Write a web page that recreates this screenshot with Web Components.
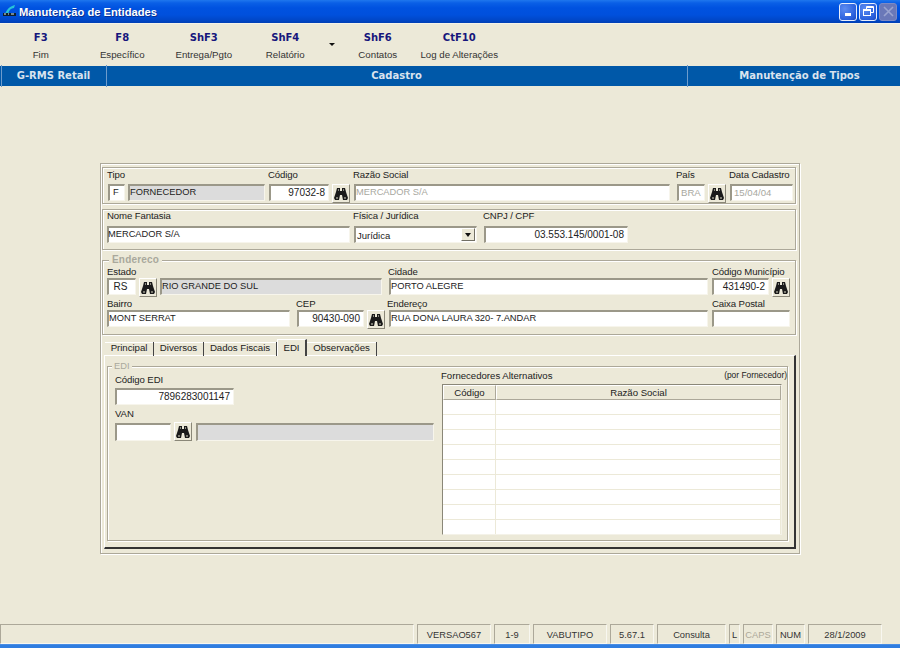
<!DOCTYPE html>
<html lang="pt">
<head>
<meta charset="utf-8">
<title>Manutenção de Entidades</title>
<style>
  html, body { margin: 0; height: 100%; background: #ece9d8; overflow: hidden; }
  body { font: 9.6px "Liberation Sans", Arial, sans-serif; color: #222; }
</style>
</head>
<body>
<win-app>
  <win-titlebar slot="top">Manutenção de Entidades</win-titlebar>
  <win-toolbar slot="top">
    <tool-btn key="F3">Fim</tool-btn>
    <tool-btn key="F8">Específico</tool-btn>
    <tool-btn key="ShF3">Entrega/Pgto</tool-btn>
    <tool-btn key="ShF4" menu>Relatório</tool-btn>
    <tool-btn key="ShF6">Contatos</tool-btn>
    <tool-btn key="CtF10">Log de Alterações</tool-btn>
  </win-toolbar>
  <nav-band slot="top"></nav-band>

  <form-panel>
    <group-box style="height:34px;padding-top:1px">
      <form-row>
        <form-field label="Tipo" style="--lx:-1px;width:17px;margin-left:1px"><text-box style="padding-left:3px">F</text-box></form-field>
        <form-field style="width:137px;margin-left:3px"><text-box kind="ro">FORNECEDOR</text-box></form-field>
        <form-field label="Código" style="--lx:-1px;width:60px;margin-left:4px"><text-box align="right">97032-8</text-box></form-field>
        <find-btn style="margin-left:3px"></find-btn>
        <form-field label="Razão Social" style="--lx:-1px;width:316px;margin-left:4px"><text-box kind="off">MERCADOR S/A</text-box></form-field>
        <form-field label="País" style="--lx:-1px;width:28px;margin-left:7px"><text-box kind="off" style="font-size:9.6px;padding-left:2px">BRA</text-box></form-field>
        <find-btn style="margin-left:3px"></find-btn>
        <form-field label="Data Cadastro" style="--lx:-1px;width:63px;margin-left:4px"><text-box kind="off" style="font-size:9.6px;padding-left:2px">15/04/04</text-box></form-field>
      </form-row>
    </group-box>
    <group-box style="height:39px;margin-top:5px;padding-top:0">
      <form-row>
        <form-field label="Nome Fantasia" gap="4" style="width:243px"><text-box style="text-indent:-1px">MERCADOR S/A</text-box></form-field>
        <form-field label="Física / Jurídica" gap="4" style="--lx:-1px;width:123px;margin-left:4px"><combo-box>Jurídica</combo-box></form-field>
        <form-field label="CNPJ / CPF" gap="4" style="--lx:-1px;width:144px;margin-left:7px"><text-box align="right">03.553.145/0001-08</text-box></form-field>
      </form-row>
    </group-box>
    <group-box legend="Endereco" style="height:68px;margin-top:10px;padding-top:5px">
      <form-row>
        <form-field label="Estado" gap="0" style="width:29px"><text-box align="center">RS</text-box></form-field>
        <find-btn style="margin-left:3px"></find-btn>
        <form-field gap="0" style="width:222px;margin-left:3px"><text-box kind="ro">RIO GRANDE DO SUL</text-box></form-field>
        <form-field label="Cidade" gap="0" style="--lx:-1px;width:319px;margin-left:7px"><text-box>PORTO ALEGRE</text-box></form-field>
        <form-field label="Código Município" gap="0" style="width:57px;margin-left:4px"><text-box align="right">431490-2</text-box></form-field>
        <find-btn style="margin-left:3px"></find-btn>
      </form-row>
      <form-row style="margin-top:3px">
        <form-field label="Bairro" gap="0" style="width:183px"><text-box>MONT SERRAT</text-box></form-field>
        <form-field label="CEP" gap="0" style="--lx:-1px;width:67px;margin-left:7px"><text-box align="right">90430-090</text-box></form-field>
        <find-btn style="margin-left:3px"></find-btn>
        <form-field label="Endereço" gap="0" style="--lx:-2px;width:319px;margin-left:4px"><text-box>RUA DONA LAURA 320- 7.ANDAR</text-box></form-field>
        <form-field label="Caixa Postal" gap="0" style="width:78px;margin-left:4px"><text-box></text-box></form-field>
      </form-row>
    </group-box>

    <tab-strip></tab-strip>
    <tab-pane>
      <group-box legend="EDI" thin style="height:173px;width:679px;padding:0">
        <edi-form></edi-form>
      </group-box>
    </tab-pane>
  </form-panel>

  <status-bar slot="bottom"></status-bar>
</win-app>

<script>
function shadow(host, html) {
  host.attachShadow({ mode: 'open' });
  host.shadowRoot.innerHTML = html;
}

class WinApp extends HTMLElement {
  constructor() {
    super();
    shadow(this, `
      <style>
        :host { display: flex; flex-direction: column; width: 900px; height: 648px; background: #ece9d8; }
        main { flex: 1; min-height: 0; padding: 77px 0 0 100px; }
        footer { height: 24px; }
      </style>
      <slot name="top"></slot>
      <main><slot></slot></main>
      <footer><slot name="bottom"></slot></footer>
    `);
  }
}

class WinTitlebar extends HTMLElement {
  constructor() {
    super();
    shadow(this, `
      <style>
        :host {
          display: flex; align-items: center; height: 23px; flex: none;
          background: linear-gradient(#1f77ee 0, #0a5fe6 3px, #0052e0 8px, #0050dc 15px, #0047c8 20px, #003fb4 23px);
          border-bottom: 1px solid #f4f2e8; color: #fff;
          font: bold 11.2px "Liberation Sans", sans-serif; text-shadow: 1px 1px 0 #0a2f90;
        }
        .logo { width: 15px; height: 15px; margin: 0 2px 0 2px; flex: none; }
        .title { flex: 1; }
        .btn {
          width: 18px; height: 18px; box-sizing: border-box; border: 1px solid #e8eefc; border-radius: 3px; margin-left: 2px;
          background: radial-gradient(circle at 30% 30%, #5c8cf2, #2a5fdc 70%, #1b49c0);
          display: flex; align-items: center; justify-content: center;
        }
        .btn.off { background: #6a78b8; border-color: #7d8ac4; }
        .btns { display: flex; margin-right: 3px; }
        svg { display: block; }
      </style>
      <svg class="logo" viewBox="0 0 15 15">
        <path d="M3 10 C5 5 8 2 13 1 L12 4 C9 4 7 6 6 10 Z" fill="#27c4d8"/>
        <rect x="1" y="9" width="13" height="3" fill="#10202c"/>
        <path d="M2 10h2M6 10h1M9 10h3" stroke="#d8f0f4" stroke-width="1"/>
      </svg>
      <span class="title"><slot></slot></span>
      <div class="btns">
        <div class="btn"><svg width="11" height="11"><rect x="2" y="7" width="6" height="3" fill="#fff"/></svg></div>
        <div class="btn"><svg width="11" height="11" fill="none" stroke="#fff"><path d="M3.5 3.5V.5h7v6H8"/><rect x=".5" y="3.5" width="7" height="6"/><path d="M.5 4.5h7M3.5 1.5h7" /></svg></div>
        <div class="btn off"><svg width="11" height="11" stroke="#9aa4d0" stroke-width="1.6"><path d="M1 1l9 9M10 1l-9 9"/></svg></div>
      </div>
    `);
  }
}

class WinToolbar extends HTMLElement {
  constructor() {
    super();
    shadow(this, `
      <style>
        :host { display: flex; height: 42px; flex: none; background: #ece9d8; }
      </style>
      <slot></slot>
    `);
  }
}

class ToolBtn extends HTMLElement {
  constructor() {
    super();
    const key = this.getAttribute('key');
    const menu = this.hasAttribute('menu');
    shadow(this, `
      <style>
        :host { display: flex; width: 81.5px; flex: none; position: relative; }
        :host([menu]) { margin-right: 11px; }
        .in { width: 100%; text-align: center; white-space: nowrap; font: 9.7px "Liberation Sans", sans-serif; color: #333; }
        b { display: block; margin-top: 8px; height: 12px; font: bold 10px/12px "DejaVu Sans", sans-serif; color: #16167c; }
        span { display: block; margin-top: 5px; line-height: 12px; }
        i { position: absolute; left: 84px; top: 19px; border: 3px solid transparent; border-top: 3px solid #111; border-bottom: 0; }
      </style>
      <div class="in"><b>${key}</b><span><slot></slot></span></div>
      ${menu ? '<i></i>' : ''}
    `);
  }
}

class NavBand extends HTMLElement {
  constructor() {
    super();
    shadow(this, `
      <style>
        :host {
          display: flex; height: 20px; flex: none; background: #0058a8; color: #d9e3ee;
          font: bold 10px/20px "DejaVu Sans", sans-serif; text-align: center;
        }
        div { position: relative; white-space: nowrap; }
        div::before {
          content: ""; position: absolute; left: 0; top: -1px; bottom: -1px; width: 1px; background: #6d9ccc;
        }
        .a { width: 105px; margin-left: 1px; }
        .b { width: 581px; }
        .c { width: 213px; padding-left: 12px; box-sizing: border-box; }
      </style>
      <div class="a">G-RMS Retail</div>
      <div class="b">Cadastro</div>
      <div class="c">Manutenção de Tipos</div>
    `);
  }
}

class FormPanel extends HTMLElement {
  constructor() {
    super();
    shadow(this, `
      <style>
        :host {
          display: block; width: 700px; height: 391px; box-sizing: border-box; padding: 3px 3px 0 1px;
          border: 1px solid #aca899; box-shadow: inset 1px 1px 0 #fff, 1px 1px 0 #fff;
        }
      </style>
      <slot></slot>
    `);
  }
}

class GroupBox extends HTMLElement {
  constructor() {
    super();
    const legend = this.getAttribute('legend');
    shadow(this, `
      <style>
        :host {
          display: block; position: relative; padding: 2px 4px 0;
          border: 1px solid #aca899; box-shadow: inset 1px 1px 0 #fff, 1px 1px 0 #fff;
        }
        .legend {
          position: absolute; left: 6px; top: -7px; padding: 0 3px; background: #ece9d8;
          font: bold 10px/12px "Liberation Sans", sans-serif; letter-spacing: .2px; color: #a9a89c;
        }
        :host([thin]) .legend { font-weight: normal; font-size: 9.3px; left: 4px; letter-spacing: 0; padding: 0 2px; }
      </style>
      ${legend ? `<div class="legend">${legend}</div>` : ''}
      <slot></slot>
    `);
  }
}

class FormRow extends HTMLElement {
  constructor() {
    super();
    shadow(this, `
      <style>:host { display: flex; align-items: flex-end; }</style>
      <slot></slot>
    `);
  }
}

class FormField extends HTMLElement {
  constructor() {
    super();
    const label = this.getAttribute('label') || '';
    const gap = this.getAttribute('gap') || '3';
    shadow(this, `
      <style>
        :host { display: block; flex: none; }
        label {
          display: block; height: 12px; line-height: 12px; margin: 0 0 ${gap}px var(--lx, 0); white-space: nowrap;
          color: #222; font-size: 9.6px; letter-spacing: -.1px;
        }
      </style>
      <label>${label}</label>
      <slot></slot>
    `);
  }
}

class TextBox extends HTMLElement {
  constructor() {
    super();
    shadow(this, `
      <style>
        :host {
          display: block; box-sizing: border-box; height: 17px; background: #fff; color: #222;
          border-style: solid; border-width: 2px 1px 1px 2px;
          border-color: #9b9889 #f7f5ec #f7f5ec #9b9889;
          padding: 0 3px 0 0; line-height: 13px; font-size: 9.3px; white-space: nowrap;
        }
        :host([align="right"]), :host([align="center"]) { font-size: 10px; }
        :host([align="right"]) { text-align: right; }
        :host([align="center"]) { text-align: center; }
        :host([kind="ro"]) { background: #dcdcdc; }
        :host([kind="off"]) { color: #a8a8a0; }
      </style>
      <slot></slot>
    `);
  }
}

class ComboBox extends HTMLElement {
  constructor() {
    super();
    shadow(this, `
      <style>
        :host {
          display: flex; box-sizing: border-box; height: 17px; background: #fff; color: #222;
          border-style: solid; border-width: 2px 1px 1px 2px;
          border-color: #9b9889 #f7f5ec #f7f5ec #9b9889;
          padding-left: 1px; line-height: 15px; font-size: 9.5px;
        }
        span { flex: 1; }
        button {
          all: unset; box-sizing: border-box; width: 14px; height: 13px; margin: 0 1px 0 0; background: #ece9d8;
          border: 1px solid; border-color: #fff #716f64 #716f64 #fff;
          display: flex; align-items: center; justify-content: center;
        }
        i { border: 3.5px solid transparent; border-top: 4px solid #111; border-bottom: 0; }
      </style>
      <span><slot></slot></span>
      <button type="button"><i></i></button>
    `);
  }
}

class FindBtn extends HTMLElement {
  constructor() {
    super();
    shadow(this, `
      <style>
        :host {
          display: flex; flex: none; box-sizing: border-box; width: 18px; height: 19px; align-items: center; justify-content: center;
          background: #ece9d8; border: 1px solid; border-color: #fff #8a8778 #8a8778 #fff; margin-bottom: -2px;
        }
        svg { display: block; }
      </style>
      <svg width="14" height="13" viewBox="0 0 14 13" fill="#1a1a1a">
        <path d="M3 1h3v3h2V1h3l1 4 2 6-1 2H9L8 8H6l-1 5H1L0 11l2-6z"/>
        <path d="M2 10h2v2H2zM10 10h2v2h-2z" fill="#7a7a70"/>
        <path d="M4 2h1v2H4zM9 2h1v2H9z" fill="#8a8a80"/>
      </svg>
    `);
  }
}

class TabStrip extends HTMLElement {
  constructor() {
    super();
    const tabs = [
      ['Principal', 49, false], ['Diversos', 50, false], ['Dados Fiscais', 73, false],
      ['EDI', 30, true], ['Observações', 70, false]
    ];
    shadow(this, `
      <style>
        :host { display: flex; height: 17px; margin-top: 3px; padding-left: 3px; position: relative; font-size: 9.7px; letter-spacing: -.05px; }
        div { box-sizing: border-box; height: 14px; margin-top: 4px; line-height: 12px; text-align: center; white-space: nowrap; border-right: 1px solid #444; box-shadow: inset 0 1px 0 #fff; }
        div.on { height: 17px; margin-top: 1px; position: relative; z-index: 1; background: #ece9d8; line-height: 16px; border-top: 1px solid #fff; border-left: 1px solid #fff; border-right: 2px solid #444; box-shadow: none; }
      </style>
      ${tabs.map(t => `<div class="${t[2] ? 'on' : ''}" style="width:${t[1]}px">${t[0]}</div>`).join('')}
    `);
  }
}

class TabPane extends HTMLElement {
  constructor() {
    super();
    shadow(this, `
      <style>
        :host {
          display: block; box-sizing: border-box; width: 692px; height: 194px; margin-left: 2px; padding: 10px 0 0 2px;
          border-top: 1px solid #fff; border-left: 1px solid #fff; border-right: 2px solid #333; border-bottom: 2px solid #333;
        }
      </style>
      <slot></slot>
    `);
  }
}

class EdiForm extends HTMLElement {
  constructor() {
    super();
    shadow(this, `
      <style>
        :host { display: flex; height: 100%; }
        .left { width: 333px; flex: none; padding: 7px 0 0 7px; box-sizing: border-box; }
        .right { flex: 1; padding-top: 3px; position: relative; }
        .title { line-height: 12px; height: 12px; }
        .note { position: absolute; right: 0; top: 3px; font-size: 8.4px; line-height: 10px; color: #222; }
        data-grid { margin-top: 2px; }
      </style>
      <div class="left">
        <form-field label="Código EDI" gap="2" style="width:119px"><text-box align="right">7896283001147</text-box></form-field>
        <form-row style="margin-top:3px">
          <form-field label="VAN" gap="3" style="width:56px"><text-box style="height:18px"></text-box></form-field>
          <find-btn style="margin-left:3px;margin-bottom:0"></find-btn>
          <form-field style="width:238px;margin-left:4px"><text-box kind="ro" style="height:18px"></text-box></form-field>
        </form-row>
      </div>
      <div class="right">
        <div class="title">Fornecedores Alternativos</div>
        <div class="note">(por Fornecedor)</div>
        <data-grid></data-grid>
      </div>
    `);
  }
}

class DataGrid extends HTMLElement {
  constructor() {
    super();
    let rows = '';
    for (let i = 0; i < 9; i++) rows += '<div class="c"></div><div class="c"></div>';
    shadow(this, `
      <style>
        :host {
          display: grid; box-sizing: border-box; width: 340px; height: 151px; margin-left: 1px; background: #fff;
          grid-template-columns: 53px 1fr; grid-auto-rows: 15px; overflow: hidden;
          border: 1px solid; border-color: #8a8778 #f4f2e8 #f4f2e8 #8a8778;
        }
        .h { background: #ece9d8; border-right: 1px solid #aca899; border-left: 1px solid #fff; border-top: 1px solid #fff; border-bottom: 1px solid #aca899; text-align: center; line-height: 13px; box-sizing: border-box; }
        .c { border-bottom: 1px solid #ece9d8; border-right: 1px solid #ece9d8; box-sizing: border-box; }
      </style>
      <div class="h">Código</div><div class="h">Razão Social</div>
      ${rows}
    `);
  }
}

class StatusBar extends HTMLElement {
  constructor() {
    super();
    const cells = [
      ['', 414], ['VERSAO567', 74], ['1-9', 36], ['VABUTIPO', 74], ['5.67.1', 44], ['Consulta', 69],
      ['L', 11], ['CAPS', 30, 'off'], ['NUM', 29], ['28/1/2009', 74]
    ];
    shadow(this, `
      <style>
        :host { display: flex; flex-direction: column; height: 24px; }
        .cells { display: flex; gap: 3px; height: 20px; flex: none; font-size: 9.3px; color: #333; }
        .cells div {
          box-sizing: border-box; text-align: center; line-height: 20px; white-space: nowrap;
          border: 1px solid; border-color: #aca899 #f8f7f0 #f8f7f0 #aca899;
        }
        .off { color: #aca899; }
        .stripe { flex: 1; background: linear-gradient(#5e9cea 0, #2f7de0 1px); }
      </style>
      <div class="cells">
        ${cells.map(c => `<div class="${c[2] || ''}" style="width:${c[1]}px">${c[0]}</div>`).join('')}
      </div>
      <div class="stripe"></div>
    `);
  }
}

customElements.define('win-app', WinApp);
customElements.define('win-titlebar', WinTitlebar);
customElements.define('win-toolbar', WinToolbar);
customElements.define('tool-btn', ToolBtn);
customElements.define('nav-band', NavBand);
customElements.define('form-panel', FormPanel);
customElements.define('group-box', GroupBox);
customElements.define('form-row', FormRow);
customElements.define('form-field', FormField);
customElements.define('text-box', TextBox);
customElements.define('combo-box', ComboBox);
customElements.define('find-btn', FindBtn);
customElements.define('tab-strip', TabStrip);
customElements.define('tab-pane', TabPane);
customElements.define('edi-form', EdiForm);
customElements.define('data-grid', DataGrid);
customElements.define('status-bar', StatusBar);
</script>
</body>
</html>
